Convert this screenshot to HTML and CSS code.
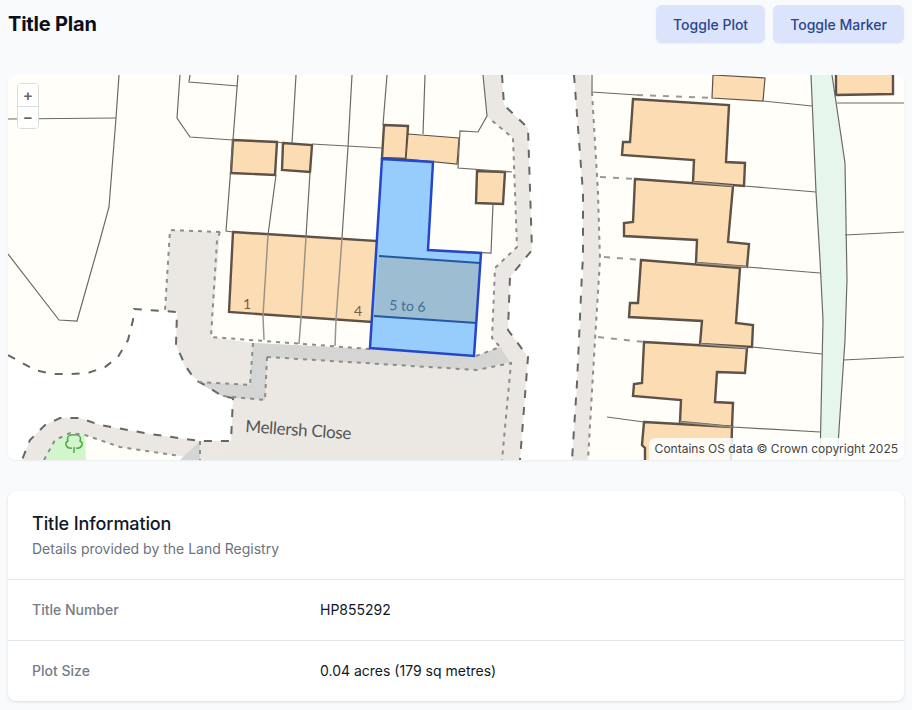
FILE: index.html
```html
<!doctype html>
<html lang="en">
<head>
    <meta charset="UTF-8">
    <meta name="viewport" content="width=device-width, initial-scale=1.0">
    <title>Title Plan</title>
    <link rel="stylesheet" href="styles.css">
</head>
<body>
    <main class="page">
        <header class="page--header">
            <h1 class="page--title">Title Plan</h1>
            <div class="page--actions">
                <button class="btn">Toggle Plot</button>
                <button class="btn">Toggle Marker</button>
            </div>
        </header>

        <section class="map">
            <svg class="map--canvas" viewBox="8 75 896 385" width="896" height="385">
                <!-- white carriageways -->
                <polygon class="road" points="8,355 35,370 70,374 105,367 128,340 134,309 177,312 176,345 187,372 205,385 233,398 231,441 200,441 150,434 100,425 80,418 60,418 45,425 30,440 22,460 8,460"/>
                <polygon class="road" points="502,75 504,105 528,128 532,250 510,277 508,330 528,357 520,460 572,460 583,257 583,193 574,75"/>

                <!-- pavements -->
                <polygon class="pave" points="170,230 220,232 211,337 253,343 370,349 476,356 500,347 492,338 495,268 517,247 513,138 490,119 487,116 483,75 502,75 504,105 528,128 532,250 510,277 508,330 528,357 520,460 200,460 231,441 233,398 205,385 187,372 176,345 177,312 165,310"/>
                <polygon class="pave" points="574,75 590,75 592,92 598,193 600,260 595,340 588,460 572,460 577,383 583,273 583,193"/>
                <polygon class="pave" points="22,460 30,440 45,425 60,418 80,418 100,425 150,434 200,441 231,441 200,460 180,456 120,447 85,435 70,433 55,440 44,460"/>
                <polygon class="pave--dark" points="253,343 370,349 476,356 500,347 510,362 477,370 267,357 265,400 233,398 222,396 197,382 250,385"/>
                <polygon class="pave--dark" points="180,460 200,441 200,460"/>
                <polygon class="grass" points="44,460 55,440 70,433 85,435 86,460"/>
                <polygon class="stream" points="811,75 832,75 845,163 847,280 845,340 837,460 820,460 823,320 820,260 816,192"/>

                <!-- tree symbol -->
                <path class="tree" d="M74 453 V447 M72 448 C66 449 64 443 68 441 C66 436 71 434 74 435 C77 434 82 436 80 441 C84 443 82 449 76 448"/>

                <!-- buildings -->
                <polygon class="bld" points="233,140 277,142 275,175 231,173"/>
                <polygon class="bld" points="283,143 312,145 310,172 282,170"/>
                <polygon class="bld" points="233,232 378,241 372,322 229,312"/>
                <polygon class="bld" points="384,125 408,126 406,159 382,158"/>
                <polygon class="bld bld--thin" points="408,134 459,138 457,164 406,159"/>
                <polygon class="bld" points="477,171 505,172 503,204 476,203"/>
                <polygon class="bld bld--thin" points="713,75 765,78 763,101 712,98"/>
                <polygon class="bld" points="836,72 893,72 893,94 836,95"/>
                <polygon class="bld" points="633,99 729,105 726,162 745,163 744,186 693,182 694,160 622,155 623,142 630,142"/>
                <polygon class="bld" points="635,179 733,186 728,242 749,244 747,267 696,263 697,240 624,236 624,223 633,222"/>
                <polygon class="bld" points="641,260 740,268 736,323 753,325 752,347 700,344 702,321 629,317 630,303 638,303"/>
                <polygon class="bld" points="644,342 747,348 745,373 717,372 715,402 733,403 732,427 680,422 681,400 633,396 634,384 642,383"/>
                <polygon class="bld" points="644,422 732,427 731,465 645,465 645,448 642,445"/>

                <!-- parcel boundaries -->
                <g class="line">
                    <polyline points="8,119 116,118"/>
                    <polyline points="119,75 116,118 109,207 100,240 77,321 59,320 8,254"/>
                    <polyline points="180,75 177,118 190,137 233,140"/>
                    <polyline points="190,75 189,82 238,86"/>
                    <polyline points="238,75 233,140 226,231 233,232"/>
                    <polyline points="296,75 292,143"/>
                    <polyline points="352,75 348,147 342,238"/>
                    <polyline points="387,75 383,125"/>
                    <polyline points="425,75 423,134"/>
                    <polyline points="277,142 283,143"/>
                    <polyline points="312,144 382,148"/>
                    <polyline points="276,175 268,235"/>
                    <polyline points="310,172 306,237"/>
                    <polyline points="483,75 487,116 478,132 460,131 458,168 512,172"/>
                    <polyline points="493,204 491,253 428,250"/>
                    <polyline points="592,75 592,92 637,95"/>
                    <polyline points="763,101 812,106"/>
                    <polyline points="837,103 904,103"/>
                    <polyline points="845,235 904,232"/>
                    <polyline points="843,360 904,357"/>
                    <polyline points="744,186 816,192"/>
                    <polyline points="747,267 820,273"/>
                    <polyline points="752,347 822,354"/>
                    <polyline points="732,427 820,432"/>
                    <polyline points="607,417 644,422"/>
                    <polyline points="811,75 816,192 820,260 823,320 820,460"/>
                    <polyline points="832,75 845,163 847,280 845,340 837,460"/>
                </g>
                <g class="line line--soft">
                    <polyline points="268,235 263,316 264,340"/>
                    <polyline points="306,237 301,318 299,344"/>
                    <polyline points="342,238 336,320 335,346"/>
                    <polyline points="693,182 733,186"/>
                    <polyline points="696,263 747,267"/>
                    <polyline points="700,344 747,348"/>
                    <polyline points="680,422 732,427"/>
                </g>
                <g class="dash">
                    <polyline points="8,355 35,370 52,374 70,374 88,373 105,367 118,357 128,340 133,320 134,309 177,312 176,345 185,365 195,380 205,385 222,396 233,398 231,441 200,441 150,434 100,425 80,418 60,418 45,425 30,440 22,460"/>
                    <polyline points="502,75 504,105 528,128 532,250 510,277 508,330 528,357 520,460"/>
                    <polyline points="574,75 583,193 583,257 582,273 577,383 572,460"/>
                </g>
                <g class="dash dash--fine">
                    <polyline points="637,95 712,98"/>
                    <polyline points="600,177 635,179"/>
                    <polyline points="604,257 641,260"/>
                    <polyline points="598,337 644,342"/>
                </g>
                <g class="dots">
                    <polyline points="220,232 170,230 165,310"/>
                    <polyline points="220,232 217,240 211,337 370,349"/>
                    <polyline points="476,356 500,347 492,338 495,268 517,247 513,138 490,119"/>
                    <polyline points="253,343 250,385 197,382"/>
                    <polyline points="267,357 265,400 222,396"/>
                    <polyline points="267,357 477,370 511,363 502,460"/>
                    <polyline points="592,92 598,193 600,260 595,340 588,460"/>
                    <polyline points="44,460 55,440 70,433 85,435 120,447 180,456"/>
                    <polyline points="200,441 200,460"/>
                </g>

                <!-- the plot -->
                <polygon class="plot" points="382,159 433,162 428,250 481,253 474,356 370,348"/>
                <polygon class="plot--house" points="379,256 480,263 477,323 374,316"/>
                <polyline class="plot--line" points="379,256 480,263"/>
                <polyline class="plot--line" points="374,316 477,323"/>
                <polygon class="plot--edge" points="382,159 433,162 428,250 481,253 474,356 370,348"/>

                <text class="label" x="243" y="309">1</text>
                <text class="label" x="354" y="316">4</text>
                <text class="label label--plot" x="389" y="310" transform="rotate(3 389 310)">5 to 6</text>
                <text class="label label--road" x="245" y="432" transform="rotate(4 245 432)">Mellersh Close</text>
            </svg>

            <div class="map--zoom">
                <button class="map--zoom-btn">+</button>
                <button class="map--zoom-btn">−</button>
            </div>
            <div class="map--credit">Contains OS data © Crown copyright 2025</div>
        </section>

        <section class="card">
            <div class="card--head">
                <h2 class="card--title">Title Information</h2>
                <p class="card--sub">Details provided by the Land Registry</p>
            </div>
            <div class="row">
                <div class="row--label">Title Number</div>
                <div class="row--value">HP855292</div>
            </div>
            <div class="row">
                <div class="row--label">Plot Size</div>
                <div class="row--value">0.04 acres (179 sq metres)</div>
            </div>
        </section>
    </main>
</body>
</html>
```

FILE: styles.css
```css
* {
    box-sizing: border-box;
}

body {
    margin: 0;
    background: #f8fafc;
    font-family: "Inter", "Liberation Sans", sans-serif;
    color: #111827;
}

.page {
    padding: 5px 8px 8px;
}

.page--header {
    display: flex;
    justify-content: space-between;
    align-items: center;
    margin-bottom: 32px;
}

.page--title {
    margin: 0;
    font-size: 20px;
    line-height: 28px;
    font-weight: 700;
    letter-spacing: -0.2px;
    color: #0b0f19;
}

.page--actions {
    display: flex;
    gap: 8px;
}

.btn {
    height: 38px;
    padding: 0 17px;
    border: 0;
    border-radius: 6px;
    background: #dbe4fb;
    color: #2a4590;
    font-family: inherit;
    font-size: 14px;
    font-weight: 500;
    box-shadow: 0 1px 2px rgba(0, 0, 0, 0.05);
}

.map {
    position: relative;
    height: 385px;
    border-radius: 8px;
    overflow: hidden;
    background: #fffef9;
    box-shadow: 0 1px 2px rgba(0, 0, 0, 0.06);
}

.map--canvas {
    display: block;
}

.map--zoom {
    position: absolute;
    left: 9px;
    top: 8px;
    display: flex;
    flex-direction: column;
    width: 22px;
    border: 1px solid #dcdcdc;
    border-radius: 4px;
    background: #fff;
    overflow: hidden;
}

.map--zoom-btn {
    height: 22px;
    padding: 1px 0 0;
    border: 0;
    background: #fff;
    color: #666;
    font-family: "Liberation Sans", sans-serif;
    font-size: 15px;
    font-weight: 700;
    line-height: 20px;
}

.map--zoom-btn + .map--zoom-btn {
    border-top: 1px solid #dcdcdc;
}

.map--credit {
    position: absolute;
    right: 0;
    bottom: 0;
    padding: 3px 6px;
    height: 22px;
    border-top-left-radius: 6px;
    background: rgba(255, 255, 255, 0.85);
    color: #444;
    font-size: 12px;
    line-height: 16px;
}

/* map layers */
.road {
    fill: #fff;
}

.pave {
    fill: #ebe8e4;
}

.pave--dark {
    fill: #d5d5d4;
}

.grass {
    fill: #d3f5cc;
}

.stream {
    fill: #e6f6ec;
}

.tree {
    fill: none;
    stroke: #4fa84f;
    stroke-width: 1.5;
}

.bld {
    fill: #fcdcb2;
    stroke: #5e5146;
    stroke-width: 2.4;
}

.bld--thin {
    stroke-width: 1.2;
}

.line polyline {
    fill: none;
    stroke: #6b6b63;
    stroke-width: 1.2;
}

.line--soft polyline {
    stroke: #9a9488;
    stroke-width: 1.5;
}

.dash polyline {
    fill: none;
    stroke: #666;
    stroke-width: 2;
    stroke-dasharray: 8 9;
}

.dash--fine polyline {
    stroke: #999;
    stroke-dasharray: 6 7;
}

.dots polyline {
    fill: none;
    stroke: #8c8c8c;
    stroke-width: 2;
    stroke-dasharray: 4 5;
}

.plot {
    fill: #96cdfd;
}

.plot--house {
    fill: #9dbdd3;
}

.plot--line {
    fill: none;
    stroke: #24589f;
    stroke-width: 1.8;
}

.plot--edge {
    fill: none;
    stroke: #2546c8;
    stroke-width: 2.5;
}

.label {
    font-family: "Lato", sans-serif;
    font-size: 14px;
    fill: #7a5c3e;
}

.label--plot {
    font-size: 14px;
    fill: #3f6f9c;
}

.label--road {
    font-size: 17px;
    letter-spacing: -0.3px;
    fill: #555;
}

.card {
    margin-top: 31px;
    border-radius: 8px;
    background: #fff;
    box-shadow: 0 1px 3px rgba(0, 0, 0, 0.12);
}

.card--head {
    padding: 21px 24px 20px;
}

.card--title {
    margin: 0;
    font-size: 18px;
    line-height: 24px;
    font-weight: 500;
    letter-spacing: -0.1px;
    color: #111827;
}

.card--sub {
    margin: 3px 0 0;
    font-size: 14px;
    line-height: 20px;
    color: #6b7280;
}

.row {
    display: grid;
    grid-template-columns: repeat(3, 1fr);
    gap: 16px;
    padding: 20px 24px;
    border-top: 1px solid #e5e7eb;
    font-size: 14px;
    line-height: 20px;
}

.row--label {
    font-weight: 500;
    color: #767c87;
}

.row--value {
    grid-column: span 2;
    color: #111827;
}
```
